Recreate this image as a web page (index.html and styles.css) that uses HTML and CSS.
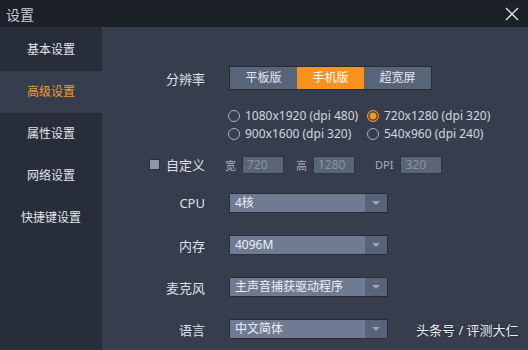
FILE: index.html
```html
<!DOCTYPE html>
<html lang="zh-CN">
<head>
    <meta charset="UTF-8">
    <title>设置</title>
    <link rel="stylesheet" href="styles.css">
</head>
<body>
    <div class="window">
        <div class="titlebar">
            <span class="title">设置</span>
            <svg class="close" width="14" height="14" viewBox="0 0 14 14">
                <path d="M1 1 L13 13 M13 1 L1 13" stroke="#e6e8ec" stroke-width="1.3" fill="none"/>
            </svg>
        </div>

        <div class="body">
            <ul class="sidebar">
                <li>基本设置</li>
                <li class="active">高级设置</li>
                <li>属性设置</li>
                <li>网络设置</li>
                <li>快捷键设置</li>
            </ul>

            <div class="main">
                <div class="row row-res">
                    <span class="label">分辨率</span>
                    <div class="segments">
                        <span class="seg">平板版</span>
                        <span class="seg on">手机版</span>
                        <span class="seg">超宽屏</span>
                    </div>
                </div>

                <div class="radios">
                    <label class="radio"><i></i>1080x1920 (dpi 480)</label>
                    <label class="radio checked"><i></i>720x1280 (dpi 320)</label>
                    <label class="radio"><i></i>900x1600 (dpi 320)</label>
                    <label class="radio"><i></i>540x960 (dpi 240)</label>
                </div>

                <div class="row row-custom">
                    <span class="label"><i class="check"></i>自定义</span>
                    <div class="custom">
                        <span class="small">宽</span>
                        <span class="field">720</span>
                        <span class="small">高</span>
                        <span class="field">1280</span>
                        <span class="small dpi">DPI</span>
                        <span class="field">320</span>
                    </div>
                </div>

                <div class="row row-select first">
                    <span class="label">CPU</span>
                    <div class="select"><span>4核</span><b></b></div>
                </div>
                <div class="row row-select">
                    <span class="label">内存</span>
                    <div class="select"><span>4096M</span><b></b></div>
                </div>
                <div class="row row-select">
                    <span class="label">麦克风</span>
                    <div class="select"><span>主声音捕获驱动程序</span><b></b></div>
                </div>
                <div class="row row-select">
                    <span class="label">语言</span>
                    <div class="select"><span>中文简体</span><b></b></div>
                    <span class="mark">头条号 / 评测大仁</span>
                </div>
            </div>
        </div>
    </div>
</body>
</html>
```

FILE: styles.css
```css
/* settings window */
body {
    margin: 0;
    font-family: "Noto Sans", "Noto Sans CJK SC", sans-serif;
    background-color: #363e4d;
    color: #d8dce4;
}

.window {
    width: 528px;
    height: 350px;
    overflow: hidden;
    display: flex;
    flex-direction: column;
}

.titlebar {
    height: 27px;
    background-color: #1c2029;
    display: flex;
    align-items: center;
    justify-content: space-between;
    padding: 0 9px 0 6px;
    flex-shrink: 0;
}

.title {
    font-size: 14px;
    color: #c9cdd5;
}

.body {
    flex: 1;
    display: flex;
}

.sidebar {
    list-style: none;
    margin: 0;
    padding: 2px 0 0 0;
    width: 102px;
    background-color: #272d39;
    flex-shrink: 0;
}

.sidebar li {
    height: 42px;
    line-height: 42px;
    text-align: center;
    font-size: 12px;
    color: #e2e5ea;
}

.sidebar li.active {
    background-color: #363e4d;
    color: #f39a2c;
}

.main {
    flex: 1;
    display: flex;
    flex-direction: column;
}

.row {
    display: flex;
    align-items: center;
}

.label {
    width: 103px;
    flex-shrink: 0;
    text-align: right;
    font-size: 13px;
    color: #dde0e6;
    margin-right: 24px;
}

/* resolution tabs */
.row-res {
    margin-top: 39px;
}

.segments {
    display: flex;
    border: 1px solid #262b36;
    background-color: #262b36;
}

.seg {
    width: 67px;
    height: 22px;
    line-height: 22px;
    text-align: center;
    font-size: 12px;
    color: #e4e7ec;
    background-color: #58647a;
}

.seg.on {
    background-color: #f7921e;
    color: #fff;
}

.radios {
    display: grid;
    grid-template-columns: 139px 140px;
    row-gap: 5px;
    margin: 19px 0 0 126px;
}

.radio {
    display: flex;
    align-items: center;
    font-size: 12px;
    line-height: 13px;
    color: #d2d6de;
}

.radio i {
    width: 10px;
    height: 10px;
    border: 1.3px solid #a9afbb;
    border-radius: 50%;
    margin-right: 5px;
    box-sizing: content-box;
}

.radio.checked i {
    border-color: #f7921e;
    background-color: #f7921e;
    box-shadow: inset 0 0 0 1.5px #363e4d;
}

/* custom size */
.row-custom {
    margin-top: 15px;
}

.row-custom .label {
    display: flex;
    align-items: center;
    justify-content: flex-end;
    margin-right: 20px;
}

.check {
    width: 9px;
    height: 9px;
    background-color: #8c96aa;
    border: 1px solid #2b303b;
    margin-right: 6px;
}

.custom {
    display: flex;
    align-items: center;
}

.small {
    font-size: 11px;
    color: #a8aebb;
    margin-right: 6px;
}

.dpi {
    margin-left: 8px;
    margin-right: 7px;
}

.field {
    width: 36px;
    height: 16px;
    line-height: 16px;
    padding-left: 4px;
    font-size: 12px;
    color: #8993a5;
    background-color: #5a6478;
    border: 1px solid #2e3440;
    margin-right: 12px;
}

/* dropdowns */
.row-select {
    margin-top: 22px;
    position: relative;
}

.row-select.first {
    margin-top: 19px;
}

.select {
    width: 157px;
    height: 18px;
    display: flex;
    border: 1px solid #272c37;
    background-color: #6e7b93;
}

.select span {
    flex: 1;
    font-size: 12px;
    line-height: 18px;
    padding-left: 5px;
    color: #eef0f4;
}

.select b {
    width: 22px;
    background-color: #58637a;
    position: relative;
}

.select b::after {
    content: "";
    position: absolute;
    left: 7px;
    top: 7px;
    border-left: 4px solid transparent;
    border-right: 4px solid transparent;
    border-top: 4px solid #9ea6b6;
}

.mark {
    position: absolute;
    left: 314px;
    top: 1px;
    font-size: 13px;
    color: #eceef2;
    text-shadow: 0 0 2px rgba(0, 0, 0, 0.6);
    white-space: nowrap;
}
```
